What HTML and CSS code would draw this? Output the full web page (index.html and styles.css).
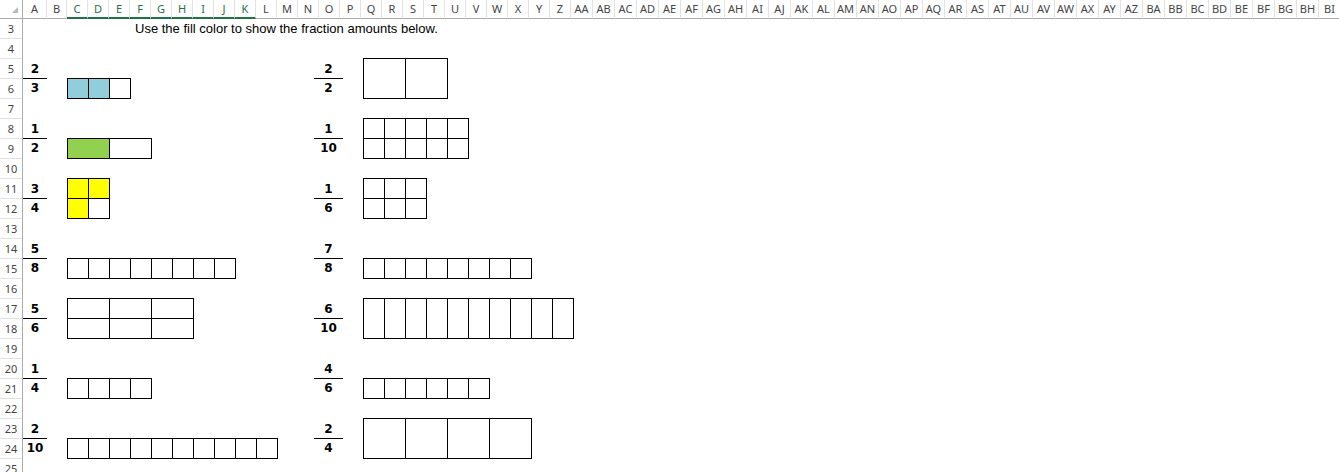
FILE: index.html
```html
<!DOCTYPE html>
<html>
<head>
    <title>Fractions</title>
    <link rel="stylesheet" href="styles.css">
</head>
<body>
    <div class="colhead">
        <div class="corner"><svg width="6" height="6" viewBox="0 0 6 6"><polygon points="6,0 6,6 0,6" fill="#b9b9b9"/></svg></div>
        <div class="col">A</div><div class="col">B</div>
        <div class="col sel">C</div><div class="col sel">D</div><div class="col sel">E</div><div class="col sel">F</div><div class="col sel">G</div><div class="col sel">H</div><div class="col sel">I</div><div class="col sel">J</div><div class="col sel">K</div>
        <div class="col">L</div><div class="col">M</div><div class="col">N</div><div class="col">O</div><div class="col">P</div><div class="col">Q</div><div class="col">R</div><div class="col">S</div><div class="col">T</div><div class="col">U</div><div class="col">V</div><div class="col">W</div><div class="col">X</div><div class="col">Y</div><div class="col">Z</div>
        <div class="col">AA</div><div class="col">AB</div><div class="col">AC</div><div class="col">AD</div><div class="col">AE</div><div class="col">AF</div><div class="col">AG</div><div class="col">AH</div><div class="col">AI</div><div class="col">AJ</div><div class="col">AK</div><div class="col">AL</div><div class="col">AM</div><div class="col">AN</div><div class="col">AO</div><div class="col">AP</div><div class="col">AQ</div><div class="col">AR</div><div class="col">AS</div><div class="col">AT</div><div class="col">AU</div><div class="col">AV</div><div class="col">AW</div><div class="col">AX</div><div class="col">AY</div><div class="col">AZ</div>
        <div class="col">BA</div><div class="col">BB</div><div class="col">BC</div><div class="col">BD</div><div class="col">BE</div><div class="col">BF</div><div class="col">BG</div><div class="col">BH</div><div class="col">BI</div>
    </div>

    <div class="sheet">
        <div class="rowhead">
            <div class="rn">3</div><div class="rn">4</div><div class="rn">5</div><div class="rn">6</div><div class="rn">7</div>
            <div class="rn">8</div><div class="rn">9</div><div class="rn">10</div><div class="rn">11</div><div class="rn">12</div>
            <div class="rn">13</div><div class="rn">14</div><div class="rn">15</div><div class="rn">16</div><div class="rn">17</div>
            <div class="rn">18</div><div class="rn">19</div><div class="rn">20</div><div class="rn">21</div><div class="rn">22</div>
            <div class="rn">23</div><div class="rn">24</div><div class="rn">25</div>
        </div>

        <div class="content">
            <div class="title">Use the fill color to show the fraction amounts below.</div>

            <!-- 2/3 and 2/2 -->
            <div class="block">
                <div class="frac"><div class="num">2</div><div class="den">3</div></div>
                <div class="boxes one"><i class="blue"></i><i class="blue"></i><i></i></div>
                <div class="frac"><div class="num">2</div><div class="den">2</div></div>
                <div class="boxes tall wide"><i></i><i></i></div>
            </div>

            <!-- 1/2 and 1/10 -->
            <div class="block">
                <div class="frac"><div class="num">1</div><div class="den">2</div></div>
                <div class="boxes one wide"><i class="green"></i><i></i></div>
                <div class="frac"><div class="num">1</div><div class="den">10</div></div>
                <div class="boxes two"><i></i><i></i><i></i><i></i><i></i><i></i><i></i><i></i><i></i><i></i></div>
            </div>

            <!-- 3/4 and 1/6 -->
            <div class="block">
                <div class="frac"><div class="num">3</div><div class="den">4</div></div>
                <div class="boxes two"><i class="yellow"></i><i class="yellow"></i><i class="yellow"></i><i></i></div>
                <div class="frac"><div class="num">1</div><div class="den">6</div></div>
                <div class="boxes two"><i></i><i></i><i></i><i></i><i></i><i></i></div>
            </div>

            <!-- 5/8 and 7/8 -->
            <div class="block">
                <div class="frac"><div class="num">5</div><div class="den">8</div></div>
                <div class="boxes one"><i></i><i></i><i></i><i></i><i></i><i></i><i></i><i></i></div>
                <div class="frac"><div class="num">7</div><div class="den">8</div></div>
                <div class="boxes one"><i></i><i></i><i></i><i></i><i></i><i></i><i></i><i></i></div>
            </div>

            <!-- 5/6 and 6/10 -->
            <div class="block">
                <div class="frac"><div class="num">5</div><div class="den">6</div></div>
                <div class="boxes two wide"><i></i><i></i><i></i><i></i><i></i><i></i></div>
                <div class="frac"><div class="num">6</div><div class="den">10</div></div>
                <div class="boxes tall"><i></i><i></i><i></i><i></i><i></i><i></i><i></i><i></i><i></i><i></i></div>
            </div>

            <!-- 1/4 and 4/6 -->
            <div class="block">
                <div class="frac"><div class="num">1</div><div class="den">4</div></div>
                <div class="boxes one"><i></i><i></i><i></i><i></i></div>
                <div class="frac"><div class="num">4</div><div class="den">6</div></div>
                <div class="boxes one"><i></i><i></i><i></i><i></i><i></i><i></i></div>
            </div>

            <!-- 2/10 and 2/4 -->
            <div class="block">
                <div class="frac"><div class="num">2</div><div class="den">10</div></div>
                <div class="boxes one"><i></i><i></i><i></i><i></i><i></i><i></i><i></i><i></i><i></i><i></i></div>
                <div class="frac"><div class="num">2</div><div class="den">4</div></div>
                <div class="boxes tall wide"><i></i><i></i><i></i><i></i></div>
            </div>
        </div>
    </div>
</body>
</html>
```

FILE: styles.css
```css
html, body { margin: 0; padding: 0; background: #fff; }
body { height: 472px; overflow: hidden; font-family: "Liberation Sans", Arial, sans-serif; color: #000; }

/* column letters */
.colhead {
    display: grid;
    grid-template-columns: 23px 24px 20px repeat(24, 21px) repeat(35, 22px);
    height: 19px;
    overflow: hidden;
}
.colhead > div {
    box-sizing: border-box;
    height: 19px;
    border-right: 1px solid #e2e2e2;
    border-bottom: 1px solid #ababab;
    font-family: "Noto Sans", "Liberation Sans", sans-serif;
    font-size: 11px;
    line-height: 18px;
    color: #444;
    text-align: center;
    white-space: nowrap;
}
.colhead .corner {
    display: flex;
    justify-content: flex-end;
    align-items: flex-end;
    padding: 0 4px 5px 0;
    border-right-color: #ababab;
}
.colhead .corner svg { display: block; }
.colhead .sel {
    color: #217346;
    border-bottom: 2px solid #217346;
    line-height: 17px;
}

/* sheet body */
.sheet {
    display: grid;
    grid-template-columns: 23px 1fr;
    margin-top: -1px;
}
.rowhead {
    border-right: 1px solid #ababab;
}
.rn {
    box-sizing: border-box;
    height: 20px;
    border-top: 1px solid #e1e1e1;
    font-family: "Noto Sans", "Liberation Sans", sans-serif;
    font-size: 11px;
    line-height: 20px;
    color: #444;
    text-align: center;
}
.rn:first-child { border-top-color: #ababab; }

.title {
    height: 40px;
    padding-left: 112px;
    font-size: 13px;
    line-height: 22px;
}

.block {
    display: grid;
    grid-template-columns: 24px 267px 29px auto;
    height: 40px;
    margin-bottom: 20px;
}

.frac {
    font-family: "DejaVu Sans", Verdana, sans-serif;
    font-weight: bold;
    font-size: 12px;
    text-align: center;
}
.frac .num { height: 20px; line-height: 22px; }
.frac .den {
    height: 20px;
    box-sizing: border-box;
    border-top: 1px solid #000;
    line-height: 19px;
}

.boxes {
    display: grid;
    grid-auto-flow: column;
    grid-auto-columns: 20px;
    gap: 1px;
    padding: 1px;
    background: #000;
    justify-self: start;
    align-self: start;
    margin-left: 20px;
}
.boxes i { display: block; background: #fff; }
.boxes.one { grid-template-rows: 19px; margin-top: 20px; }
.boxes.two { grid-template-rows: 19px 19px; }
.boxes.tall { grid-template-rows: 39px; }
.boxes.wide { grid-auto-columns: 41px; }

.boxes .blue { background: #92cddc; }
.boxes .green { background: #92d050; }
.boxes .yellow { background: #ffff00; }
```
